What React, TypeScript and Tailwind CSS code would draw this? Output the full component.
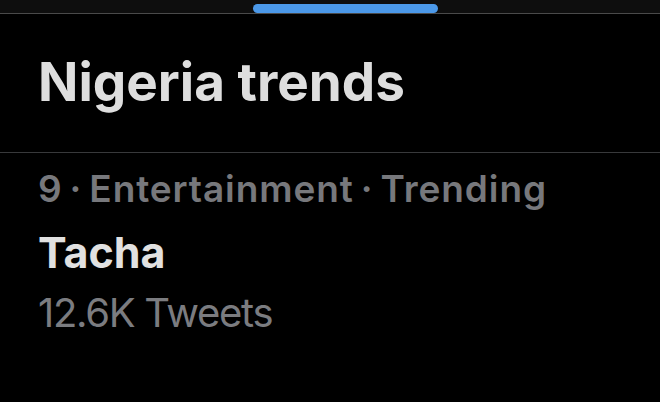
export default function App() {
  return (
    <div
      className="flex h-[402px] w-[660px] flex-col overflow-hidden bg-black"
      style={{ fontFamily: 'Inter, "Liberation Sans", sans-serif' }}
    >
      {/* top bar with tab indicator */}
      <div className="flex h-[14px] shrink-0 border-b border-[#4a4a4a] bg-[#0e0e0e]">
        <div className="ml-[253px] mt-[4px] h-[9px] w-[185px] rounded-full bg-[#4b98e8]" />
      </div>

      {/* header */}
      <div className="border-b border-[#38393b] px-[38px] pt-[42px] pb-[44px]">
        <h1 className="text-[53px] font-bold leading-[52px] text-[#dedede]">Nigeria trends</h1>
      </div>

      {/* trend item */}
      <div className="flex flex-col px-[38px] pt-[17px]">
        <div className="text-[37px] font-semibold leading-[37px] tracking-[0.9px] text-[#77787c]">
          9{'\u2009'}·{'\u2009'}Entertainment{'\u2009'}·{'\u2009'}Trending
        </div>
        <div className="mt-[24px] text-[43px] font-bold leading-[43px] text-[#e1e1e1]">Tacha</div>
        <div className="mt-[19px] text-[40px] font-normal leading-[40px] tracking-[-1.3px] text-[#7b7c80]">
          12.6K Tweets
        </div>
      </div>
    </div>
  );
}
